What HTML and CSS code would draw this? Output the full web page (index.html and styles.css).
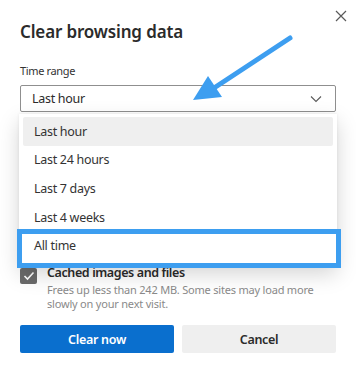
FILE: index.html
```html
<!DOCTYPE html>
<html lang="en">
<head>
    <meta charset="UTF-8">
    <meta name="viewport" content="width=device-width, initial-scale=1.0">
    <title>Clear browsing data</title>
    <link rel="stylesheet" href="styles.css">
</head>
<body>

    <div class="dialog">

        <div class="header">
            <h1 class="title">Clear browsing data</h1>
            <button class="close" aria-label="Close">
                <svg width="12" height="12" viewBox="0 0 12 12">
                    <path d="M1 1L11 11M11 1L1 11" stroke="#5a5a5a" stroke-width="1.2" fill="none"/>
                </svg>
            </button>
        </div>

        <div class="label">Time range</div>

        <div class="field">
            <div class="select">
                <span>Last hour</span>
                <svg width="12" height="8" viewBox="0 0 12 8">
                    <path d="M1 1.5L6 6.5L11 1.5" stroke="#5a5a5a" stroke-width="1.1" fill="none"/>
                </svg>
            </div>

            <ul class="menu">
                <li class="selected">Last hour</li>
                <li>Last 24 hours</li>
                <li>Last 7 days</li>
                <li>Last 4 weeks</li>
                <li class="marked">All time</li>
            </ul>
        </div>

        <!-- the other checkboxes sit here, under the open menu -->
        <div class="covered"></div>

        <div class="check">
            <span class="box">
                <svg width="12" height="10" viewBox="0 0 12 10">
                    <path d="M1.5 5L4.5 8L10.5 1.5" stroke="#fff" stroke-width="1.6" fill="none"/>
                </svg>
            </span>
            <div class="check-text">
                <div class="check-title">Cached images and files</div>
                <div class="check-desc">Frees up less than 242 MB. Some sites may load more slowly on your next visit.</div>
            </div>
        </div>

        <div class="buttons">
            <button class="btn primary">Clear now</button>
            <button class="btn">Cancel</button>
        </div>

        <svg class="pointer" width="356" height="130" viewBox="0 0 356 130">
            <line x1="290" y1="38" x2="214" y2="88" stroke="#3d9ef0" stroke-width="5" stroke-linecap="round"/>
            <polygon points="193,100 208,76 222,97" fill="#3d9ef0"/>
        </svg>
    </div>

</body>
</html>
```

FILE: styles.css
```css
*{
    margin: 0;
    padding: 0;
    box-sizing: border-box;
}
body{
    background: #fff;
    font-family: "Noto Sans", "Open Sans", sans-serif;
    color: #2b2b2b;
}
.dialog{
    position: relative;
    width: 356px;
    height: 372px;
    padding: 10px 20px 0;
    overflow: hidden;
}
.header{
    display: flex;
    justify-content: space-between;
    align-items: flex-start;
    margin-right: -11px;
}
.title{
    margin-top: 10px;
    font-size: 17px;
    font-weight: 600;
    line-height: 24px;
    letter-spacing: -0.15px;
    color: #2b2b2b;
}
.close{
    border: none;
    background: none;
    width: 12px;
    height: 12px;
    display: flex;
}
.label{
    margin-top: 19px;
    font-size: 11px;
    line-height: 16px;
    letter-spacing: -0.35px;
    color: #333;
}
.field{
    position: relative;
    margin-top: 6px;
}
.select{
    height: 27px;
    border: 1px solid #8f8f8f;
    border-radius: 2px;
    display: flex;
    align-items: center;
    justify-content: space-between;
    padding: 0 13px 0 11px;
    font-size: 12.5px;
    letter-spacing: -0.3px;
    color: #2b2b2b;
}
.menu{
    position: absolute;
    left: -1px;
    right: -1px;
    top: 29px;
    list-style: none;
    background: #fff;
    padding: 3px 4px 6px;
    box-shadow: 0 8px 20px rgba(0,0,0,0.17), 0 0 3px rgba(0,0,0,0.08);
    z-index: 2;
}
.menu li{
    position: relative;
    height: 28.6px;
    display: flex;
    align-items: center;
    padding-left: 11px;
    font-size: 12.5px;
    letter-spacing: -0.3px;
    color: #333;
    border-radius: 2px;
}
.menu .selected{
    background: #efefef;
}
/* blue call-out drawn round the last option */
.menu .marked::after{
    content: "";
    position: absolute;
    left: -6px;
    right: -8px;
    top: -2px;
    bottom: -8px;
    border: 5px solid #3d9ef0;
}
.covered{
    height: 153px;
}
.check{
    display: flex;
    gap: 10px;
}
.box{
    width: 17px;
    height: 16px;
    border-radius: 2px;
    background: #6b6b6b;
    display: flex;
    align-items: center;
    justify-content: center;
    flex-shrink: 0;
    margin-top: 3px;
}
.check-title{
    font-size: 12.5px;
    font-weight: 600;
    line-height: 16px;
    letter-spacing: -0.4px;
    color: #2b2b2b;
}
.check-desc{
    font-size: 11px;
    line-height: 14px;
    letter-spacing: -0.2px;
    color: #8a8a8a;
    margin-top: 2px;
}
.buttons{
    display: flex;
    gap: 8px;
    margin-top: 14px;
}
.btn{
    flex: 1;
    height: 28px;
    border: none;
    border-radius: 2px;
    background: #efefef;
    font-family: inherit;
    font-size: 12.5px;
    font-weight: 600;
    letter-spacing: -0.3px;
    color: #2b2b2b;
}
.btn.primary{
    background: #0a6fce;
    color: #fff;
}
.pointer{
    position: absolute;
    left: 0;
    top: 0;
    pointer-events: none;
    z-index: 3;
}
```
